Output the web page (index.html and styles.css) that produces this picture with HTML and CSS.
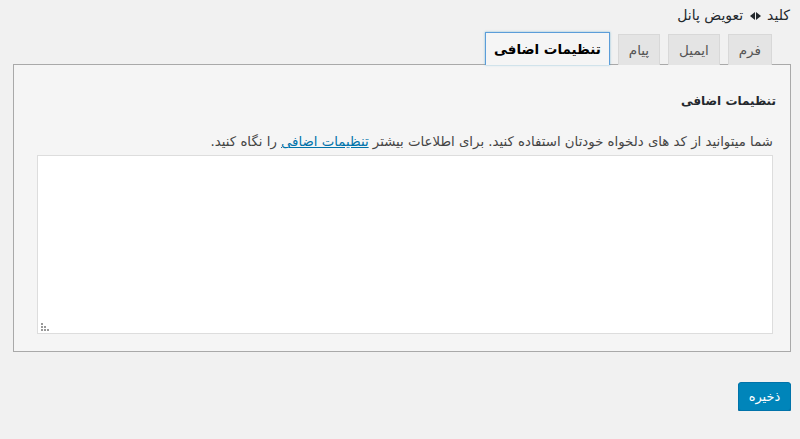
FILE: index.html
```html
<!DOCTYPE html>
<html lang="fa" dir="rtl">
<head>
<meta charset="utf-8">
<link rel="stylesheet" href="styles.css">
</head>
<body>
<div class="page">
  <div class="switch">کلید <span class="arrows"><svg width="11" height="8" viewBox="0 0 11 8"><path d="M0 4 L5 0 V8 Z M6 0 L11 4 L6 8 Z" fill="#23282d"/></svg></span> تعویض پانل</div>
  <div class="tabs">
    <div class="tab">فرم</div>
    <div class="tab">ایمیل</div>
    <div class="tab">پیام</div>
    <div class="tab active">تنظیمات اضافی</div>
  </div>
  <div class="panel">
    <h2 class="title">تنظیمات اضافی</h2>
    <p class="desc">شما میتوانید از کد های دلخواه خودتان استفاده کنید. برای اطلاعات بیشتر <a href="#" class="link">تنظیمات اضافی</a> را نگاه کنید.</p>
    <div class="area"><span class="grip"><svg width="8" height="8" viewBox="0 0 8 8"><g fill="#999"><rect x="0" y="0" width="2" height="2"/><rect x="0" y="3" width="2" height="2"/><rect x="3" y="3" width="2" height="2"/><rect x="0" y="6" width="2" height="2"/><rect x="3" y="6" width="2" height="2"/><rect x="6" y="6" width="2" height="2"/></g></svg></span></div>
  </div>
  <div class="actions"><button class="save">ذخیره</button></div>
</div>
</body>
</html>
```
FILE: styles.css
```css
html, body {
  margin: 0;
  background: #f1f1f1;
}
body {
  font-family: "DejaVu Sans", sans-serif;
  font-size: 13.3px;
  color: #23282d;
}
.page {
  padding: 5px 9px 0 13px;
}
.switch {
  height: 20px;
  line-height: 20px;
  padding-right: 1px;
  font-size: 14px;
}
.arrows {
  display: inline-block;
  vertical-align: middle;
  margin: 0 2px;
}
.arrows svg { display: block; }
.tabs {
  display: flex;
  align-items: flex-end;
  gap: 8px;
  margin-top: 8px;
  padding-right: 19px;
  height: 32px;
  position: relative;
  z-index: 1;
  margin-bottom: -1px;
}
.tab {
  height: 30px;
  line-height: 30px;
  padding: 0 10px;
  background: #e4e4e4;
  border: 1px solid #d8d8d8;
  border-bottom: none;
  color: #555;
  font-size: 13.5px;
}
.tab.active {
  height: 32px;
  line-height: 32px;
  background: #f5f5f5;
  border: 1px solid #5b9dd9;
  border-bottom: none;
  color: #000;
  font-weight: bold;
  font-size: 13.5px;
  padding: 0 8px;
  box-shadow: 0 0 2px rgba(30,140,190,.5);
}
.panel {
  background: #f5f5f5;
  border: 1px solid #a9a9a9;
  height: 286px;
  padding: 0 17px 0 17px;
}
.title {
  margin: 27px -3px 0 0;
  font-size: 12px;
  font-weight: bold;
  line-height: 18px;
  color: #23282d;
}
.desc {
  margin: 23px 0 0 0;
  line-height: 18px;
  color: #444;
}
.link {
  color: #0073aa;
  text-decoration: underline;
}
.area {
  margin: 4px 0 0 6px;
  height: 177px;
  background: #fff;
  border: 1px solid #ddd;
  position: relative;
}
.grip {
  position: absolute;
  left: 3px;
  bottom: 2px;
  line-height: 0;
}
.actions {
  display: flex;
  margin-top: 30px;
}
.save {
  font-family: "DejaVu Sans", sans-serif;
  font-size: 13px;
  width: 53px;
  height: 29px;
  background: #0085ba;
  border: 1px solid #0073aa;
  border-radius: 3px;
  color: #fff;
  box-shadow: 0 1px 0 #006799;
  padding: 0;
}
```
